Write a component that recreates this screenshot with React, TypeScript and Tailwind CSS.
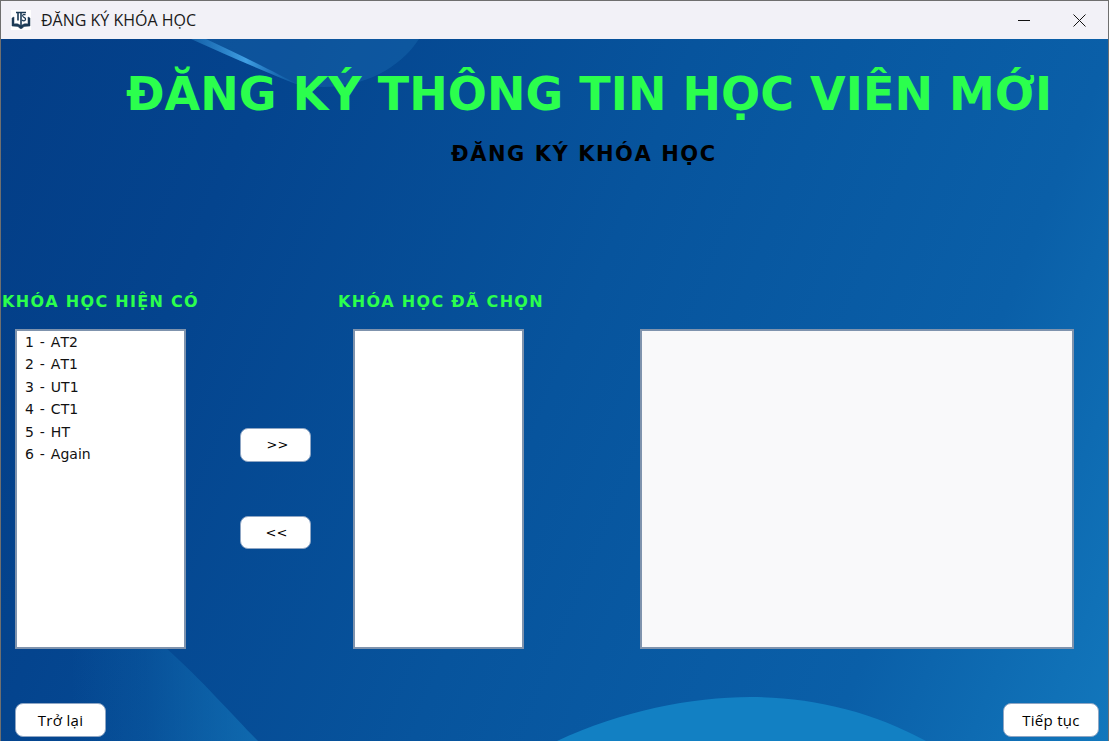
export default function App() {
  const courses = ["1 - AT2", "2 - AT1", "3 - UT1", "4 - CT1", "5 - HT", "6 - Again"];
  const box = "border-2 border-[#7f93ad] h-[320px]";
  const btn = "bg-white border border-[#8fa6c4] rounded-[8px] text-black flex items-center justify-center";
  return (
    <div className="relative w-[1109px] h-[741px] overflow-hidden flex flex-col font-['Liberation_Sans','DejaVu_Sans',sans-serif] bg-[#f2f1f7] [font-kerning:none]">
      <div className="h-[39px] shrink-0 bg-[#f2f1f7] border-t border-l border-r border-[#6f6f6f] flex items-center pl-[10px] relative z-10">
        <svg width="20" height="20" viewBox="0 0 20 20" className="shrink-0 bg-white" fill="none" stroke="#1c3b55">
          <path d="M1 16V8l2-1v7c2-.5 5-.5 7 2 2-2.500 5-2.500 7-2V7l2 1v8l-6 .5-2 2h-2l-2-2z" fill="#1c3b55" strokeWidth="0.5" />
          <path d="M5 2.500h10M7 2.500v8M10 2v15" strokeWidth="1.600" />
          <path d="M14.500 5c-2-1.500-3.500 0-2.500 1.500s3 1 2.500 3-2.500 1.500-3.500.500" strokeWidth="1.200" />
        </svg>
        <span className="ml-[10px] text-[16px] text-[#1a1a1a] font-['Open_Sans','Liberation_Sans',sans-serif]">ĐĂNG KÝ KHÓA HỌC</span>
        <div className="ml-auto flex items-center mr-[22px] gap-[43px]">
          <svg width="12" height="12" viewBox="0 0 12 12" stroke="#111" strokeWidth="1"><path d="M0 6.500h12" /></svg>
          <svg width="13" height="13" viewBox="0 0 13 13" stroke="#111" strokeWidth="1" fill="none"><path d="M.5.500l12 12M12.500.500l-12 12" /></svg>
        </div>
      </div>

      <div className="relative flex-1 flex flex-col border-l border-r border-[#6f6f6f] bg-[linear-gradient(112deg,#033d86_0%,#04448e_20%,#07549d_50%,#0a5fa8_80%,#1277bc_100%)]">
        <svg className="absolute inset-0 w-full h-full" viewBox="0 0 1107 702" preserveAspectRatio="none">
          <defs>
            <linearGradient id="streak" x1="0" y1="0" x2="1" y2="0">
              <stop offset="0" stopColor="#2f8fd6" stopOpacity="0.25" />
              <stop offset="0.5" stopColor="#46a8ec" stopOpacity="0.9" />
              <stop offset="1" stopColor="#1f80c8" stopOpacity="0" />
            </linearGradient>
            <linearGradient id="band" x1="0" y1="0" x2="1" y2="0">
              <stop offset="0" stopColor="#1272b6" stopOpacity="0" />
              <stop offset="0.4" stopColor="#1272b6" stopOpacity="0.2" />
              <stop offset="1" stopColor="#1272b6" stopOpacity="0.75" />
            </linearGradient>
          </defs>
          <path d="M190 0C225 16 265 33 295 45 345 56 395 36 418 0Z" fill="#2a85c8" fillOpacity="0.24" />
          <path d="M190 0C225 16 265 33 300 47 275 34 240 16 205 0Z" fill="url(#streak)" />
          <path d="M165 609C200 640 235 680 257 702H70V609Z" fill="url(#band)" />
          <path d="M556 702C620 672 690 658 750 658 810 658 870 672 925 702Z" fill="#1280c3" />
        </svg>

        <div className="relative flex flex-col flex-1">
          <h1 className="pl-[125px] pt-[25px] h-[93px] text-[46px] leading-[60px] font-bold text-[#2bff4d] font-['DejaVu_Sans',sans-serif] whitespace-nowrap tracking-[0.05px]">ĐĂNG KÝ THÔNG TIN HỌC VIÊN MỚI</h1>
          <h2 className="pl-[450px] h-[158px] pt-[6px] text-[21px] leading-[32px] font-bold text-black font-['DejaVu_Sans',sans-serif] whitespace-nowrap tracking-[1.55px]">ĐĂNG KÝ KHÓA HỌC</h2>

          <div className="flex h-[38px] font-['DejaVu_Sans',sans-serif] font-bold text-[#2bff4d] text-[16px] leading-[24px] tracking-[1.3px]">
            <span className="w-[337px] pl-[1px] whitespace-nowrap">KHÓA HỌC HIỆN CÓ</span>
            <span className="whitespace-nowrap">KHÓA HỌC ĐÃ CHỌN</span>
          </div>

          <div className="flex pl-[14px] mt-[1px]">
            <ul className={`${box} w-[171px] bg-white pl-[8px] font-['DejaVu_Sans',sans-serif] text-[14px] leading-[22.400px] text-[#111] [word-spacing:1.500px]`}>
              {courses.map((c) => (
                <li key={c}>{c}</li>
              ))}
            </ul>
            <div className="w-[167px] flex flex-col pl-[54px] pt-[99px] font-['DejaVu_Sans',sans-serif]">
              <button className={`${btn} w-[71px] h-[34px] text-[13px] pl-[4px]`}>&gt;&gt;</button>
              <button className={`${btn} w-[71px] h-[33px] mt-[54px] text-[13px] pl-[2px]`}>&lt;&lt;</button>
            </div>
            <div className={`${box} w-[171px] bg-white`} />
            <div className={`${box} w-[434px] ml-[116px] bg-[#f9f9fa]`} />
          </div>

          <div className="flex justify-between pl-[14px] pr-[9px] mt-[54px] font-['Open_Sans',sans-serif] text-[15px] tracking-[0.3px]">
            <button className={`${btn} w-[91px] h-[34px]`}>Trở lại</button>
            <button className={`${btn} w-[96px] h-[34px]`}>Tiếp tục</button>
          </div>
        </div>
      </div>
    </div>
  );
}
